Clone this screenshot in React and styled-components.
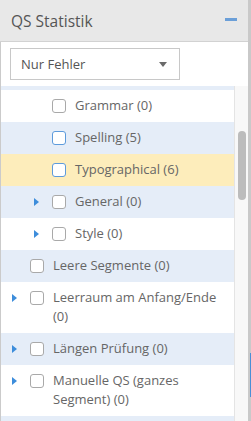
import React from "react";
import styled, { createGlobalStyle } from "styled-components";

const Global = createGlobalStyle`
  html, body { margin: 0; padding: 0; background: #fff; }
  body { font-family: "Open Sans", "Noto Sans", sans-serif; }
  * { box-sizing: border-box; }
`;

const Frame = styled.div`
  display: flex;
  width: 251px;
  height: 421px;
  overflow: hidden;
`;

const Panel = styled.div`
  width: 248px;
  display: flex;
  flex-direction: column;
  min-height: 0;
`;

const Edge = styled.div`
  width: 3px;
  background: #c9c9c9;
  display: flex;
  flex-direction: column;
`;

const EdgeMarker = styled.div`
  align-self: flex-end;
  width: 1px;
  height: 44px;
  margin-top: 353px;
  background: #4a8fd6;
`;

const Header = styled.div`
  height: 42px;
  flex: none;
  background: #e8e8e8;
  border-bottom: 1px solid #d2d2d2;
  display: flex;
  align-items: center;
  justify-content: space-between;
  padding: 0 11px 0 11px;
`;

const Title = styled.div`
  font-size: 15.5px;
  color: #555;
  font-weight: 400;
`;

const Minus = styled.div`
  width: 12px;
  height: 3px;
  background: #6b9fd8;
  margin-top: -2px;
`;

const Body = styled.div`
  flex: 1;
  min-height: 0;
  border-left: 1px solid #cbcbcb;
  background: #fff;
  display: flex;
  flex-direction: column;
`;

const FilterRow = styled.div`
  padding: 6px 0 6px 9px;
  flex: none;
`;

const Select = styled.div`
  width: 170px;
  height: 32px;
  border: 1px solid #c8c8c8;
  background: #fff;
  display: flex;
  align-items: center;
  justify-content: space-between;
  padding: 0 12px 0 10px;
  font-size: 13px;
  color: #555;
`;

const Caret = styled.span`
  width: 0;
  height: 0;
  border-left: 4.5px solid transparent;
  border-right: 4.5px solid transparent;
  border-top: 5px solid #6a6a6a;
`;

const TreeArea = styled.div`
  flex: 1;
  min-height: 0;
  display: flex;
`;

const Viewport = styled.div`
  flex: 1;
  min-width: 0;
  overflow: hidden;
`;

const List = styled.div`
  margin-top: ${(p) => -p.$scroll}px;
`;

const Row = styled.div`
  display: flex;
  align-items: flex-start;
  padding: 6px 8px 7px ${(p) => 11 + (p.$level - 1) * 22}px;
  background: ${(p) => (p.$selected ? "#fdedbb" : p.$stripe ? "#e5edf8" : "#fff")};
`;

const ArrowSlot = styled.div`
  width: 18px;
  flex: none;
  height: 19px;
  display: flex;
  align-items: center;
`;

const Arrow = styled.span`
  width: 0;
  height: 0;
  border-left: 5px solid #3d8ddb;
  border-top: 4.5px solid transparent;
  border-bottom: 4.5px solid transparent;
`;

const Check = styled.span`
  width: 14px;
  height: 14px;
  flex: none;
  margin-top: 2.5px;
  border: 1px solid ${(p) => (p.$active ? "#5d9bdc" : "#a9a9a9")};
  border-radius: 3px;
  background: #fff;
`;

const Label = styled.span`
  margin-left: 9px;
  font-size: 13px;
  line-height: 19px;
  color: #666;
`;

const Track = styled.div`
  width: 14px;
  flex: none;
  background: #f8f8f8;
  border-left: 1px solid #e4e4e4;
  padding: 45px 0 0 3px;
`;

const Thumb = styled.div`
  width: 8px;
  height: 69px;
  border-radius: 4px;
  background: #bcbcbc;
`;

const items = [
  { label: "LanguageTool (11)", level: 1, arrow: true },
  { label: "Grammar (0)", level: 2 },
  { label: "Spelling (5)", level: 2, active: true },
  { label: "Typographical (6)", level: 2, active: true, selected: true },
  { label: "General (0)", level: 2, arrow: true },
  { label: "Style (0)", level: 2, arrow: true },
  { label: "Leere Segmente (0)", level: 1 },
  { label: "Leerraum am Anfang/Ende (0)", level: 1, arrow: true },
  { label: "Längen Prüfung (0)", level: 1, arrow: true },
  { label: "Manuelle QS (ganzes Segment) (0)", level: 1, arrow: true },
  { label: "Nicht übersetzt (0)", level: 1, arrow: true },
];

export default function App() {
  return (
    <>
      <Global />
      <Frame>
        <Panel>
          <Header>
            <Title>QS Statistik</Title>
            <Minus />
          </Header>
          <Body>
            <FilterRow>
              <Select>
                <span>Nur Fehler</span>
                <Caret />
              </Select>
            </FilterRow>
            <TreeArea>
              <Viewport>
                <List $scroll={28}>
                  {items.map((it, i) => (
                    <Row
                      key={it.label}
                      $level={it.level}
                      $stripe={i % 2 === 0}
                      $selected={it.selected}
                    >
                      <ArrowSlot>{it.arrow && <Arrow />}</ArrowSlot>
                      <Check $active={it.active} />
                      <Label>{it.label}</Label>
                    </Row>
                  ))}
                </List>
              </Viewport>
              <Track>
                <Thumb />
              </Track>
            </TreeArea>
          </Body>
        </Panel>
        <Edge>
          <EdgeMarker />
        </Edge>
      </Frame>
    </>
  );
}
